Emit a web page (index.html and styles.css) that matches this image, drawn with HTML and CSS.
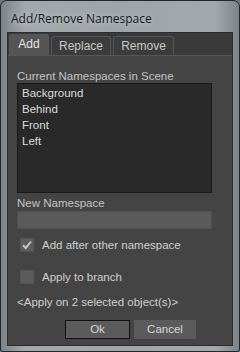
FILE: index.html
```html
<!DOCTYPE html>
<html>
<head>
<meta charset="utf-8">
<link rel="stylesheet" href="styles.css">
</head>
<body>
<div class="window">
  <div class="title">Add/Remove Namespace</div>
  <div class="client">
    <div class="tabs">
      <div class="tab active">Add</div>
      <div class="tab">Replace</div>
      <div class="tab">Remove</div>
    </div>
    <div class="panel">
      <div class="label">Current Namespaces in Scene</div>
      <div class="list">
        <div class="item">Background</div>
        <div class="item">Behind</div>
        <div class="item">Front</div>
        <div class="item">Left</div>
      </div>
      <div class="label label2">New Namespace</div>
      <div class="input"></div>
      <div class="check-row first">
        <span class="box"><svg width="14" height="14" viewBox="0 0 14 14"><path d="M3 7.2 L5.8 10 L11 3.5" fill="none" stroke="#c8c8c8" stroke-width="2"/></svg></span>
        <span class="check-text">Add after other namespace</span>
      </div>
      <div class="check-row second">
        <span class="box"></span>
        <span class="check-text">Apply to branch</span>
      </div>
      <div class="info">&lt;Apply on 2 selected object(s)&gt;</div>
      <div class="buttons">
        <div class="btn ok">Ok</div>
        <div class="btn cancel">Cancel</div>
      </div>
    </div>
  </div>
</div>
</body>
</html>
```
FILE: styles.css
```css
html, body { margin: 0; padding: 0; background: #6f757a; }
.window {
  width: 240px; height: 352px; box-sizing: border-box;
  border: 1px solid #23272b; border-radius: 7px 7px 3px 3px;
  background: linear-gradient(90deg, #7d8388 0%, #a2a8ac 10%, #9ea4a8 50%, #a2a8ac 90%, #7d8388 100%);
  padding: 0 6px 5px 6px;
  display: flex; flex-direction: column;
  font-family: "Liberation Sans", sans-serif;
}
.title {
  height: 31px; box-sizing: border-box; padding: 9px 0 0 4px;
  font-family: "Open Sans", sans-serif; font-size: 12px; color: #15181a;
  text-shadow: 0 0 6px rgba(255,255,255,0.6);
}
.client {
  flex: 1; background: #3a3a3a; border: 1px solid #2a2d30;
  display: flex; flex-direction: column;
}
.tabs { display: flex; gap: 2px; height: 22px; padding: 1px 0 0 1px; box-sizing: border-box; align-items: flex-end; }
.tab {
  height: 19px; box-sizing: border-box; border: 1px solid #565656; border-bottom: none;
  border-radius: 3px 3px 0 0; background: #3c3c3c; color: #c8c8c8;
  font-size: 12px; line-height: 18px; text-align: center; padding: 0;
}
.tab.active { height: 21px; background: #555555; color: #e6e6e6; line-height: 19px; width: 40px; }
.tab:nth-child(2) { width: 60px; }
.tab:nth-child(3) { width: 61px; }
.panel {
  flex: 1; background: #444444; border-top: 1px solid #555;
  padding: 0 0 0 9px; display: flex; flex-direction: column;
  font-size: 11px; color: #cfcfcf;
}
.label { margin-top: 13px; height: 14px; line-height: 14px; color: #c4c4c4; font-size: 11.5px; }
.list {
  width: 195px; height: 110px; box-sizing: border-box; background: #292929; border: 1px solid #191919;
  padding: 1px 0 0 4px; color: #dcdcdc; margin-top: 0;
}
.item { height: 16px; line-height: 16px; font-size: 11.5px; }
.label2 { margin-top: 3px; }
.input { width: 195px; height: 18px; background: #5a5a5a; box-sizing: border-box; border: 1px solid #505050; margin-top: 1px; }
.check-row { display: flex; align-items: center; gap: 8px; padding-left: 3px; height: 14px; }
.check-row.first { margin-top: 9px; }
.check-row.second { margin-top: 18px; }
.box { width: 14px; height: 14px; background: #5c5c5c; box-sizing: border-box; border: 1px solid #555; display: flex; }
.box svg { margin: -1px; }
.check-text { color: #cfcfcf; line-height: 14px; font-size: 11.5px; }
.info { margin-top: 11px; height: 15px; line-height: 15px; color: #cfcfcf; font-size: 11.5px; }
.buttons { display: flex; gap: 4px; margin-top: 10px; padding-left: 48px; }
.btn { height: 19px; box-sizing: border-box; background: #5b5b5b; color: #d6d6d6; text-align: center; line-height: 17px; border: 1px solid #5b5b5b; font-size: 11.5px; }
.btn.ok { width: 65px; border-color: #111; }
.btn.cancel { width: 62px; }
```
